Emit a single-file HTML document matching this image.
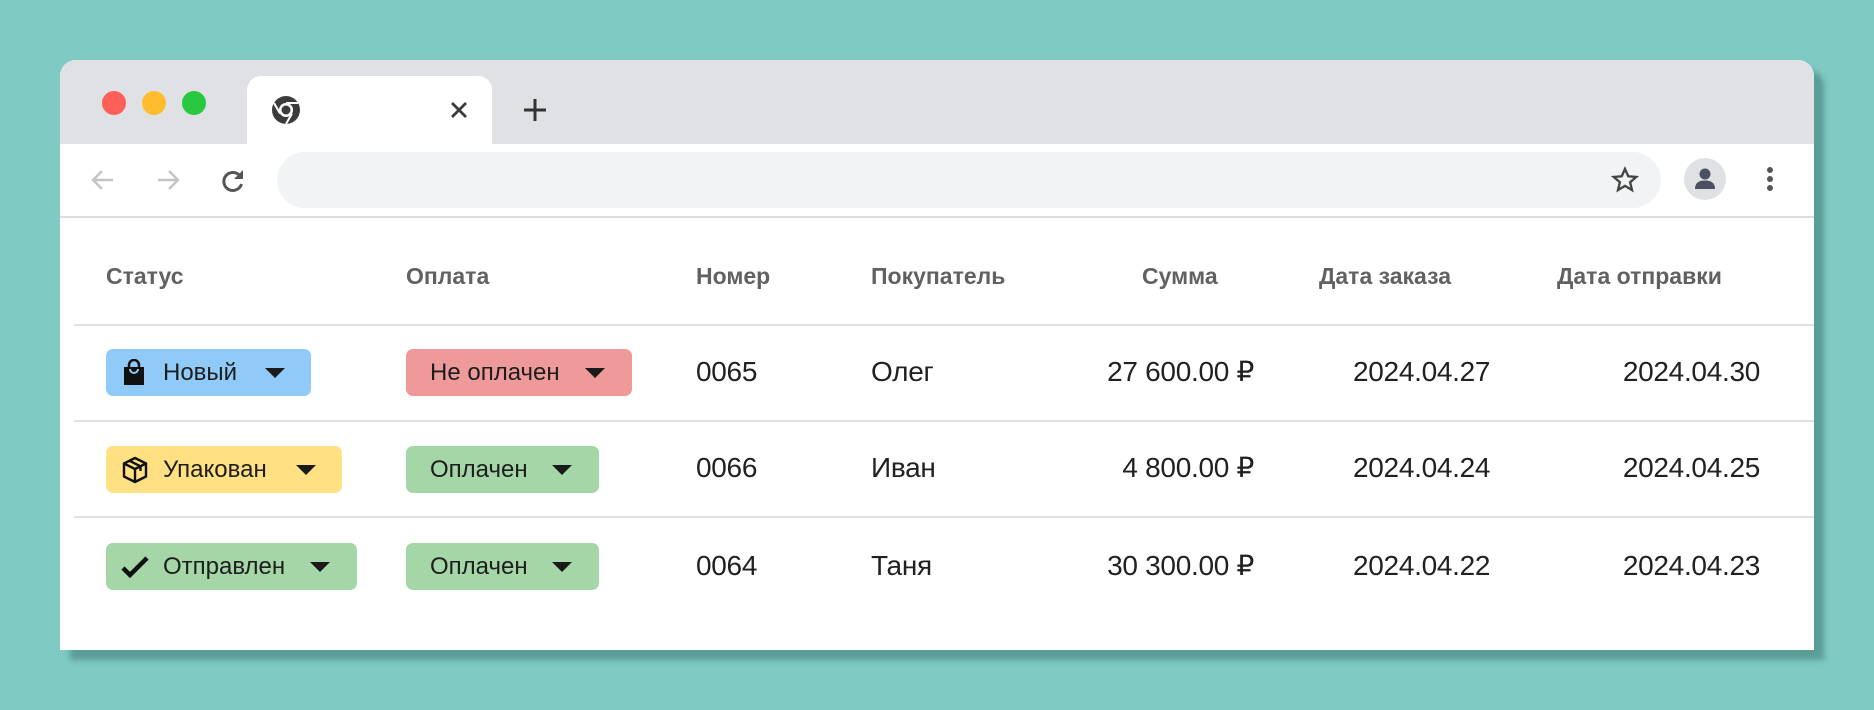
<!DOCTYPE html>
<html><head><meta charset="utf-8"><style>
*{margin:0;padding:0;box-sizing:border-box}
body{width:1874px;height:710px;background:#7fcac2;position:relative;overflow:hidden;font-family:"Liberation Sans",Arial,sans-serif}
.win{position:absolute;left:60px;top:60px;width:1754px;height:590px;background:#fff;border-radius:16px 16px 0 0;box-shadow:10px 10px 6px rgba(60,120,115,.55);overflow:hidden}
.tabbar{position:absolute;left:0;top:0;width:100%;height:84px;background:#dfe1e5}
.dot{position:absolute;top:31px;width:24px;height:24px;border-radius:50%}
.tab{position:absolute;left:187px;top:16px;width:245px;height:70px;background:#fff;border-radius:14px 14px 0 0}
.omni{position:absolute;left:217px;top:92px;width:1384px;height:56px;background:#f1f3f4;border-radius:28px}
.sep{position:absolute;left:0;top:156px;width:100%;height:2px;background:#dadce0}
.a{position:absolute;white-space:nowrap}
.h{font-weight:bold;font-size:23px;color:#616161;top:203px;line-height:26px}
.v{font-size:28px;color:#212121;line-height:30px;letter-spacing:-0.3px}
.line{position:absolute;left:14px;right:0;height:2px;background:#e0e0e0}
.b{position:absolute;height:47px;border-radius:7px;font-size:24px;color:#1d1d1d}
.b .t{position:absolute;top:11px;line-height:26px}
.tri{position:absolute;top:19px;width:0;height:0;border-left:10px solid transparent;border-right:10px solid transparent;border-top:10px solid #1a1a1a}
</style></head><body>
<div class="win">
 <div class="tabbar"></div>
 <div class="dot" style="left:42px;background:#fe5f57"></div>
 <div class="dot" style="left:82px;background:#febc2e"></div>
 <div class="dot" style="left:122px;background:#28c840"></div>
 <div class="tab"></div>
 <svg style="position:absolute;left:211px;top:35px" width="30" height="30" viewBox="0 0 30 30"><circle cx="15" cy="15" r="14" fill="#3c3c3c"/><circle cx="15" cy="15" r="7" fill="#fff"/><circle cx="15" cy="15" r="4.5" fill="#3c3c3c"/><path d="M15 8 L27 8 M9 18.5 L3 8 M21 18.5 L15 29" stroke="#fff" stroke-width="2"/></svg>
 <svg style="position:absolute;left:390px;top:41px" width="18" height="18" viewBox="0 0 18 18"><path d="M2 2L16 16M16 2L2 16" stroke="#3c3c3c" stroke-width="2.8"/></svg>
 <svg style="position:absolute;left:463px;top:38px" width="24" height="24" viewBox="0 0 24 24"><path d="M12 1V23M1 12H23" stroke="#333" stroke-width="3"/></svg>
 <svg style="position:absolute;left:30px;top:107px" width="26" height="26" viewBox="0 0 26 26"><path d="M23 13H4M12 4L3 13L12 22" stroke="#c4c4c4" stroke-width="2.5" fill="none"/></svg>
 <svg style="position:absolute;left:95px;top:107px" width="26" height="26" viewBox="0 0 26 26"><path d="M3 13H22M14 4L23 13L14 22" stroke="#c4c4c4" stroke-width="2.5" fill="none"/></svg>
 <svg style="position:absolute;left:159px;top:107px" width="28" height="28" viewBox="0 0 28 28"><path d="M21 9A9 9 0 1 0 22.5 17" stroke="#555" stroke-width="3" fill="none"/><path d="M24 3V12H15Z" fill="#555"/></svg>
 <div class="omni"></div>
 <svg style="position:absolute;left:1551px;top:106px" width="28" height="28" viewBox="0 0 24 24"><path d="M12 2.5l2.8 6.3 6.8.6-5.2 4.5 1.6 6.7L12 17l-6 3.6 1.6-6.7-5.2-4.5 6.8-.6z" fill="none" stroke="#444" stroke-width="2"/></svg>
 <div style="position:absolute;left:1624px;top:98px;width:42px;height:42px;border-radius:50%;background:#dfe1e5"></div>
 <svg style="position:absolute;left:1632px;top:106px" width="26" height="26" viewBox="0 0 26 26"><circle cx="13" cy="8" r="5.5" fill="#4a5060"/><path d="M3 23C3 16 8 14.5 13 14.5S23 16 23 23Z" fill="#4a5060"/></svg>
 <div style="position:absolute;left:1707px;top:107px;width:6px;height:6px;border-radius:50%;background:#555;box-shadow:0 9px 0 #555,0 18px 0 #555"></div>
 <div class="sep"></div>

 <div class="a h" style="left:46px">Статус</div>
 <div class="a h" style="left:346px">Оплата</div>
 <div class="a h" style="left:636px">Номер</div>
 <div class="a h" style="left:811px">Покупатель</div>
 <div class="a h" style="left:1082px">Сумма</div>
 <div class="a h" style="left:1259px">Дата заказа</div>
 <div class="a h" style="left:1497px">Дата отправки</div>

 <div class="line" style="top:264px"></div>
 <div class="line" style="top:360px"></div>
 <div class="line" style="top:456px"></div>

 <!-- row 1 -->
 <div class="b" style="left:46px;top:289px;width:205px;background:#90caf9">
  <svg style="position:absolute;left:16px;top:10px" width="24" height="28" viewBox="0 0 24 28"><path d="M7 9V6a5 5 0 0 1 10 0v3" fill="none" stroke="#111" stroke-width="2.5"/><path d="M2 8H22V26H2Z" fill="#111"/><path d="M8 10a4 4 0 0 0 8 0" fill="none" stroke="#90caf9" stroke-width="2"/></svg>
  <span class="t" style="left:57px">Новый</span><div class="tri" style="left:159px"></div></div>
 <div class="b" style="left:346px;top:289px;width:226px;background:#ef9a9a">
  <span class="t" style="left:24px">Не оплачен</span><div class="tri" style="left:179px"></div></div>
 <div class="a v" style="left:636px;top:297px">0065</div>
 <div class="a v" style="left:811px;top:297px">Олег</div>
 <div class="a v" style="right:560px;top:297px">27 600.00 ₽</div>
 <div class="a v" style="left:1293px;top:297px">2024.04.27</div>
 <div class="a v" style="right:54px;top:297px">2024.04.30</div>

 <!-- row 2 -->
 <div class="b" style="left:46px;top:386px;width:236px;background:#ffe082">
  <svg style="position:absolute;left:16px;top:10px" width="26" height="28" viewBox="0 0 26 28"><path d="M13 2L24 7.5V20.5L13 26L2 20.5V7.5Z M2 7.5L13 13L24 7.5 M13 13V26 M7.5 4.8L18.5 10.3V15" fill="none" stroke="#111" stroke-width="2.4" stroke-linejoin="round"/></svg>
  <span class="t" style="left:57px">Упакован</span><div class="tri" style="left:190px"></div></div>
 <div class="b" style="left:346px;top:386px;width:193px;background:#a5d6a7">
  <span class="t" style="left:24px">Оплачен</span><div class="tri" style="left:146px"></div></div>
 <div class="a v" style="left:636px;top:393px">0066</div>
 <div class="a v" style="left:811px;top:393px">Иван</div>
 <div class="a v" style="right:560px;top:393px">4 800.00 ₽</div>
 <div class="a v" style="left:1293px;top:393px">2024.04.24</div>
 <div class="a v" style="right:54px;top:393px">2024.04.25</div>

 <!-- row 3 -->
 <div class="b" style="left:46px;top:483px;width:251px;background:#a5d6a7">
  <svg style="position:absolute;left:15px;top:11px" width="28" height="26" viewBox="0 0 28 26"><path d="M2 14L9 21L26 4" fill="none" stroke="#111" stroke-width="4.5"/></svg>
  <span class="t" style="left:57px">Отправлен</span><div class="tri" style="left:204px"></div></div>
 <div class="b" style="left:346px;top:483px;width:193px;background:#a5d6a7">
  <span class="t" style="left:24px">Оплачен</span><div class="tri" style="left:146px"></div></div>
 <div class="a v" style="left:636px;top:491px">0064</div>
 <div class="a v" style="left:811px;top:491px">Таня</div>
 <div class="a v" style="right:560px;top:491px">30 300.00 ₽</div>
 <div class="a v" style="left:1293px;top:491px">2024.04.22</div>
 <div class="a v" style="right:54px;top:491px">2024.04.23</div>
</div>
</body></html>
